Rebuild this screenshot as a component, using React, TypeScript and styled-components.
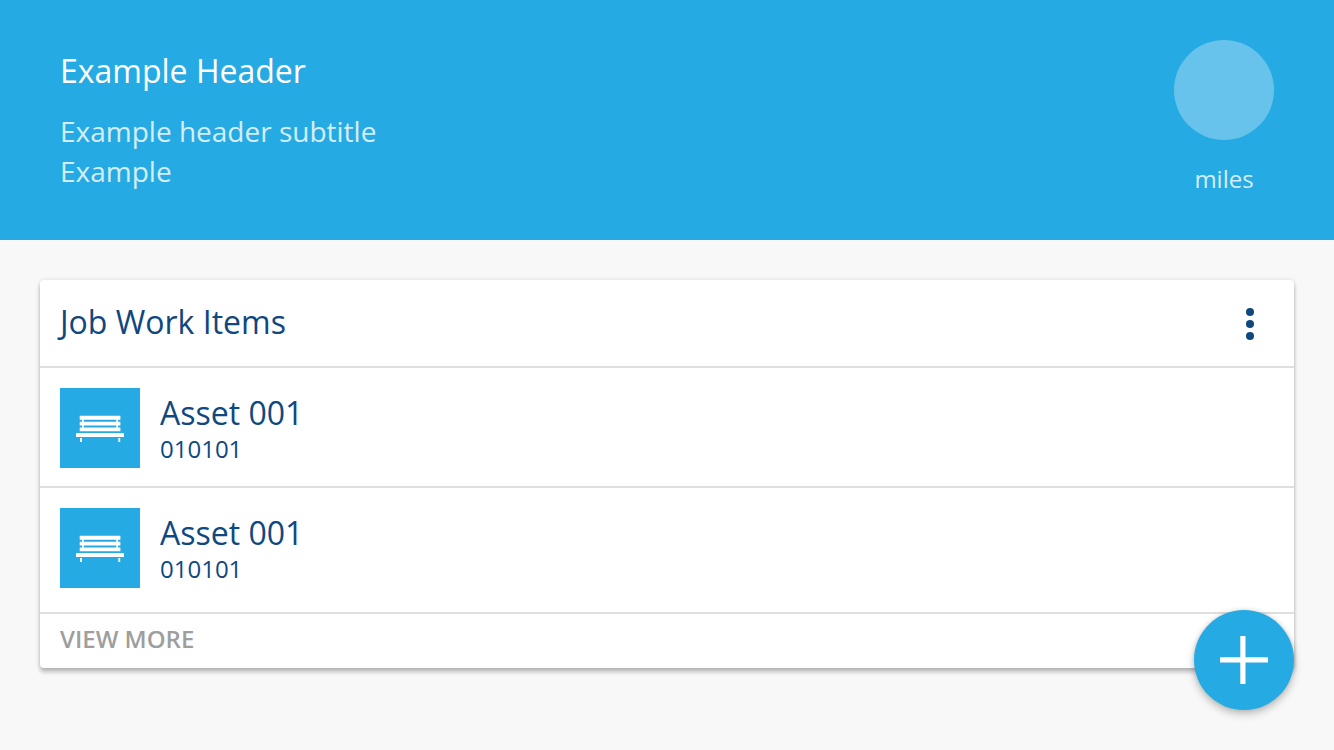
import React from 'react';
import styled, { createGlobalStyle } from 'styled-components';

const GlobalStyle = createGlobalStyle`
  *, *::before, *::after { box-sizing: border-box; }
  body {
    margin: 0;
    background: #f8f8f8;
    color: #0f487f;
    font-family: 'Open Sans', 'Noto Sans', sans-serif;
  }
  h1, h2, h3, p, ul { margin: 0; padding: 0; font-weight: 400; }
  button { border: 0; padding: 0; background: none; font: inherit; cursor: pointer; }
`;

const Header = styled.header`
  display: flex;
  justify-content: space-between;
  min-height: 240px;
  padding: 40px 60px;
  background: #26aae3;
  color: #fff;
`;

const HeaderText = styled.div`
  padding-top: 9px;
`;

const HeaderTitle = styled.h1`
  font-size: 32px;
  line-height: 44px;
`;

const HeaderSubtitle = styled.p`
  margin-top: 18px;
  font-size: 28px;
  line-height: 40px;
  opacity: 0.8;
`;

const Distance = styled.div`
  display: flex;
  flex-direction: column;
  align-items: center;
  gap: 20px;
  font-size: 24px;
  line-height: 38px;
`;

const DistanceCircle = styled.div`
  width: 100px;
  height: 100px;
  border-radius: 50%;
  background: rgba(255, 255, 255, 0.3);
`;

const DistanceUnit = styled.span`
  opacity: 0.8;
`;

const Main = styled.main`
  padding: 40px 40px 82px;
`;

const Card = styled.section`
  position: relative;
  border-radius: 4px;
  background: #fff;
  box-shadow: 0 0 4px rgba(0, 0, 0, 0.12), 0 4px 4px rgba(0, 0, 0, 0.24);
`;

const CardHeader = styled.div`
  display: flex;
  align-items: center;
  justify-content: space-between;
  height: 88px;
  padding: 0 20px 2px;
  border-bottom: 2px solid #dfdfdf;
`;

const CardTitle = styled.h2`
  font-size: 32px;
  line-height: 44px;
`;

const MenuButton = styled.button`
  display: flex;
  align-items: center;
  justify-content: center;
  width: 48px;
  height: 48px;
  padding-top: 4px;
  color: #0f487f;
`;

const List = styled.ul`
  list-style: none;
`;

const Item = styled.li`
  display: flex;
  gap: 20px;
  padding: 20px 20px 18px;
  border-bottom: 2px solid #dfdfdf;

  &:last-child { padding-bottom: 24px; }
`;

const ItemIcon = styled.div`
  display: flex;
  align-items: center;
  justify-content: center;
  width: 80px;
  height: 80px;
  background: #26aae3;
`;

const ItemName = styled.h3`
  padding-top: 6px;
  font-size: 32px;
  line-height: 38px;
`;

const ItemCode = styled.p`
  font-size: 24px;
  line-height: 34px;
`;

const ViewMore = styled.button`
  display: block;
  width: 100%;
  height: 54px;
  padding: 0 20px 6px;
  color: #9e9e9e;
  font-size: 24px;
  font-weight: 600;
  text-align: left;
`;

const AddButton = styled.button`
  position: absolute;
  right: 0;
  bottom: -42px;
  display: flex;
  align-items: center;
  justify-content: center;
  width: 100px;
  height: 100px;
  border-radius: 50%;
  background: #26aae3;
  box-shadow: 0 0 4px rgba(0, 0, 0, 0.12), 0 4px 8px rgba(0, 0, 0, 0.24);
`;

const MoreIcon = () => (
  <svg width="8" height="32" viewBox="0 0 8 32" fill="currentColor" aria-hidden="true">
    <circle cx="4" cy="4" r="4" />
    <circle cx="4" cy="16" r="4" />
    <circle cx="4" cy="28" r="4" />
  </svg>
);

const BenchIcon = () => (
  <svg width="48" height="28" viewBox="0 0 48 28" fill="#fff" aria-hidden="true">
    <path d="M3.7 1.8h40.7v4H3.7zM3.7 7.8h40.7v3.700H3.700zM3.700 13.400h40.700v3.800H3.700z" />
    <path d="M6 5h1.800v9H6zM40.300 5h1.800v9h-1.800z" />
    <path d="M0 19h48v4H0zM4 24h1.900v4H4zM42.300 24h1.900v4h-1.900z" />
  </svg>
);

const PlusIcon = () => (
  <svg width="48" height="48" viewBox="0 0 48 48" fill="#fff" aria-hidden="true">
    <path d="M20.300 0h5.200v48h-5.200zM0 21.200h48v5.200H0z" />
  </svg>
);

const items = [
  { id: 1, name: 'Asset 001', code: '010101' },
  { id: 2, name: 'Asset 001', code: '010101' },
];

export default function App() {
  return (
    <>
      <GlobalStyle />
      <Header>
        <HeaderText>
          <HeaderTitle>Example Header</HeaderTitle>
          <HeaderSubtitle>
            Example header subtitle
            <br />
            Example
          </HeaderSubtitle>
        </HeaderText>
        <Distance>
          <DistanceCircle />
          <DistanceUnit>miles</DistanceUnit>
        </Distance>
      </Header>
      <Main>
        <Card>
          <CardHeader>
            <CardTitle>Job Work Items</CardTitle>
            <MenuButton type="button" aria-label="More options">
              <MoreIcon />
            </MenuButton>
          </CardHeader>
          <List>
            {items.map((item) => (
              <Item key={item.id}>
                <ItemIcon>
                  <BenchIcon />
                </ItemIcon>
                <div>
                  <ItemName>{item.name}</ItemName>
                  <ItemCode>{item.code}</ItemCode>
                </div>
              </Item>
            ))}
          </List>
          <ViewMore type="button">VIEW MORE</ViewMore>
          <AddButton type="button" aria-label="Add work item">
            <PlusIcon />
          </AddButton>
        </Card>
      </Main>
    </>
  );
}
